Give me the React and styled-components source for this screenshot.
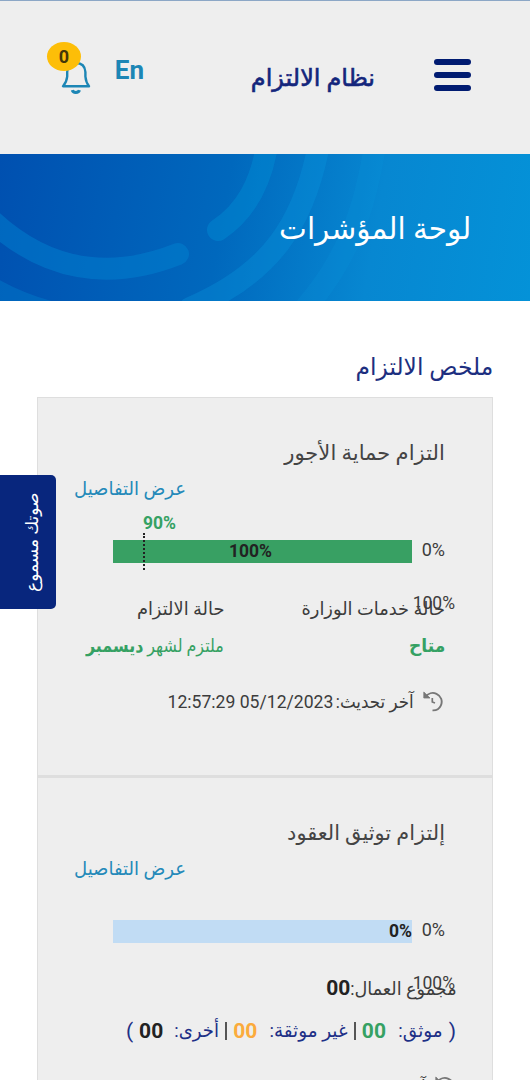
import React from 'react';
//styled-components
import styled, { createGlobalStyle } from 'styled-components';

const App = () => {
	return (
		<>
			<GlobalStyle />
			<Page dir="rtl">
				<Header>
					<Burger>
						<span />
						<span />
						<span />
					</Burger>
					<Brand>
						<Fit>نظام الالتزام</Fit>
					</Brand>
					<Language>En</Language>
					<Notifications>
						<BellIcon />
						<Badge>0</Badge>
					</Notifications>
				</Header>
				<Banner>
					<BannerArcs />
					<h1>
						<Fit $x={0.984}>لوحة المؤشرات</Fit>
					</h1>
				</Banner>
				<Main>
					<SectionTitle>
						<Fit $x={0.975}>ملخص الالتزام</Fit>
					</SectionTitle>
					<Card>
						<CardTitle>
							<Fit $x={1.005}>التزام حماية الأجور</Fit>
						</CardTitle>
						<DetailsLink>
							<Fit $left $x={0.95}>عرض التفاصيل</Fit>
						</DetailsLink>
						<Progress value={100} target={90} color="#38a063" />
						<StatusGrid>
							<dt>
								<Fit $x={0.99}>حالة خدمات الوزارة</Fit>
							</dt>
							<dt>
								<Fit $x={0.99}>حالة الالتزام</Fit>
							</dt>
							<dd>
								<Fit $x={0.95}>
									<b>متاح</b>
								</Fit>
							</dd>
							<dd>
								<Fit $x={0.885}>
									ملتزم لشهر <b>ديسمبر</b>
								</Fit>
							</dd>
						</StatusGrid>
						<Updated>
							<HistoryIcon />
							<Fit $x={0.93}>آخر تحديث:</Fit>
							<Stamp>12:57:29 05/12/2023</Stamp>
						</Updated>
					</Card>
					<Card>
						<CardTitle>
							<Fit $x={0.993}>إلتزام توثيق العقود</Fit>
						</CardTitle>
						<DetailsLink>
							<Fit $left $x={0.95}>عرض التفاصيل</Fit>
						</DetailsLink>
						<Progress value={0} color="#38a063" />
						<Total>
							<Fit $x={0.98}>مجموع العمال:</Fit>
							<Count $gap={-2}>00</Count>
						</Total>
						<Breakdown>
							<Paren>(</Paren>
							<Fit $x={0.97}>موثق:</Fit>
							<Count $color="#35a163" $gap={11}>00</Count>
							<Divider />
							<Fit $x={0.97}>غير موثقة:</Fit>
							<Count $color="#fbab3c" $gap={10}>00</Count>
							<Divider />
							<Fit $x={0.95}>أخرى:</Fit>
							<Count $gap={9}>00</Count>
							<Paren $last>)</Paren>
						</Breakdown>
						<Updated $low>
							<HistoryIcon />
							<Fit $x={0.93}>آخر تحديث:</Fit>
						</Updated>
					</Card>
				</Main>
				<VoiceTab>صوتك مسموع</VoiceTab>
			</Page>
		</>
	);
};

const Progress = ({ value, target, color }) => (
	<ProgressRow>
		<Scale>0%</Scale>
		<Track>
			<Fill style={{ width: `${value}%` }} $color={color} />
			<Value $end={value === 0}>{value}%</Value>
			{target && (
				<Target style={{ right: `${target}%` }}>
					<span>{target}%</span>
				</Target>
			)}
		</Track>
		<ScaleEnd>100%</ScaleEnd>
	</ProgressRow>
);

const BellIcon = () => (
	<svg width="30" height="36" viewBox="0 0 30 36" fill="none" stroke="#1c86b5" strokeWidth="2.4">
		<path
			d="M2 27.200H28C25.800 24.500 24.800 22 24.400 17.500V13C24 7.500 21 4 15 4S6.500 7.500 6.200 13V17.500C5.800 22 4.500 24.500 2 27.200Z"
			strokeLinejoin="round"
		/>
		<path d="M11.300 31.200C12 34.200 17.700 34.200 18.400 31.200" strokeWidth="3" />
	</svg>
);

const HistoryIcon = () => (
	<svg width="20" height="22" viewBox="0 0 20 22" fill="none" stroke="#777" strokeWidth="1.900">
		<path d="M2.500 5.800C5 2.300 9.500 1 13.500 2.800C18 4.900 20 10 17.800 14.700C16.300 18 13 19.600 9.500 19.400" />
		<path d="M0.800 1V7H7L0.800 1Z" fill="#777" strokeWidth="0.800" />
		<path d="M9.300 7V11L12 12" strokeWidth="1.700" />
	</svg>
);

const BannerArcs = () => (
	<Arcs viewBox="0 0 530 147" fill="none" strokeLinecap="round" strokeWidth="22">
		<path d="M-12 63C45 118 110 127 178 100" stroke="#0086d2" strokeOpacity=".45" />
		<path d="M-20 127C0 140 20 150 50 158" stroke="#0086d2" strokeOpacity=".35" />
		<path d="M218 76C245 58 262 30 268 -15" stroke="#0092d8" strokeOpacity=".4" />
		<path d="M190 154C270 120 305 70 320 -15" stroke="#0895dc" strokeOpacity=".35" />
		<path d="M300 160C345 110 365 60 376 -15" stroke="#0895dc" strokeOpacity=".2" />
	</Arcs>
);

const GlobalStyle = createGlobalStyle`
	* {
		box-sizing: border-box;
		margin: 0;
		padding: 0;
	}
	body {
		background: #fff;
		font-family: Roboto, "DejaVu Sans", sans-serif;
		color: #3c3c3c;
		overflow: hidden;
	}
`;

const Page = styled.div`
	position: relative;
	height: 1080px;
	overflow: hidden;
`;

const Fit = styled.span`
	display: inline-block;
	white-space: nowrap;
	transform: scaleX(${(p) => p.$x || 1});
	transform-origin: ${(p) => (p.$left ? 'left' : 'right')};
`;

const Header = styled.header`
	display: flex;
	align-items: flex-start;
	height: 154px;
	padding: 0 59px 0 0;
	background: #eee;
	border-top: 1px solid #8ca7c6;
`;

const Burger = styled.div`
	display: flex;
	flex-direction: column;
	gap: 7px;
	margin-top: 58px;
	span {
		width: 37px;
		height: 6px;
		border-radius: 3px;
		background: #001b71;
	}
`;

const Brand = styled.div`
	width: 124px;
	margin: 58px 59px 0 0;
	font-size: 24px;
	line-height: 38px;
	-webkit-text-stroke: 0.600px #14267c;
	color: #14267c;
`;

const Language = styled.div`
	width: 30px;
	margin: 54px 107px 0 0;
	font-size: 26px;
	line-height: 30px;
	font-weight: 700;
	color: #1c86b5;
`;

const Notifications = styled.div`
	position: relative;
	width: 30px;
	margin: 58px 23px 0 0;
`;

const Badge = styled.div`
	position: absolute;
	left: -14px;
	top: -17px;
	width: 34px;
	height: 29px;
	border-radius: 50%;
	background: #fdbe08;
	color: #443708;
	font-size: 18px;
	line-height: 29px;
	font-weight: 700;
	text-align: center;
`;

const Banner = styled.section`
	position: relative;
	height: 147px;
	padding: 52px 59px 0 0;
	background: linear-gradient(100deg, #0050b0 0%, #0068bd 42%, #0787d1 70%, #0492d8 100%);
	h1 {
		position: relative;
		font-size: 30px;
		line-height: 46px;
		font-weight: 400;
		color: #fff;
	}
`;

const Arcs = styled.svg`
	position: absolute;
	left: 0;
	top: 0;
	width: 530px;
	height: 147px;
`;

const Main = styled.main`
	padding: 46px 37px 0;
`;

const SectionTitle = styled.h2`
	height: 50px;
	font-size: 24px;
	line-height: 40px;
	font-weight: 400;
	color: #1d2f80;
`;

const Card = styled.section`
	height: 380px;
	padding: 37px 47px 0 36px;
	background: #eee;
	border: 1px solid #dedede;
	border-bottom-width: 2px;
`;

const CardTitle = styled.h3`
	font-size: 21px;
	line-height: 36px;
	font-weight: 400;
	color: #444;
`;

const DetailsLink = styled.div`
	direction: ltr;
	font-size: 19px;
	line-height: 36px;
	color: #2389b9;
`;

const ProgressRow = styled.div`
	position: relative;
	display: flex;
	align-items: flex-start;
	margin-top: 33px;
	height: 50px;
`;

const Scale = styled.div`
	width: 33px;
	font-size: 18px;
	line-height: 20px;
`;

const ScaleEnd = styled(Scale)`
	position: absolute;
	right: -10px;
	top: 53px;
	width: auto;
	font-size: 17.500px;
`;

const Track = styled.div`
	position: relative;
	width: 299px;
	height: 23px;
	background: #c1dcf4;
`;

const Fill = styled.div`
	height: 100%;
	background: ${(p) => p.$color};
`;

const Value = styled.div`
	position: absolute;
	top: 0;
	right: 0;
	width: ${(p) => (p.$end ? 'auto' : '323px')};
	font-size: 17.500px;
	line-height: 23px;
	font-weight: 700;
	color: #222;
	text-align: center;
`;

const Target = styled.div`
	position: absolute;
	top: -7px;
	height: 37px;
	margin-right: -2px;
	border-left: 2px dotted #222;
	span {
		position: absolute;
		left: -2px;
		top: -20px;
		font-size: 17.500px;
		line-height: 20px;
		font-weight: 700;
		color: #35a163;
	}
`;

const StatusGrid = styled.dl`
	display: grid;
	grid-template-columns: 221px 1fr;
	font-size: 18px;
	line-height: 37px;
	dt {
		white-space: nowrap;
	}
	dd {
		color: #35a163;
		white-space: nowrap;
	}
`;

const Updated = styled.div`
	display: flex;
	align-items: center;
	gap: 9px;
	margin: ${(p) => (p.$low ? '17px -10px 0 0' : '19px 2px 0 0')};
	font-size: 18px;
	line-height: 38px;
	white-space: nowrap;
`;

const Stamp = styled.span`
	direction: ltr;
	margin-right: -12px;
	font-size: 17.600px;
`;

const Total = styled.div`
	display: flex;
	margin-right: -12px;
	font-size: 18px;
	line-height: 37px;
`;

const Breakdown = styled.div`
	display: flex;
	align-items: center;
	margin: 4px -11px 0 0;
	font-size: 19px;
	line-height: 40px;
	color: #1d3086;
`;

const Count = styled.b`
	margin-right: ${(p) => p.$gap || 0}px;
	font-size: 21px;
	color: ${(p) => p.$color || '#222'};
`;

const Divider = styled.i`
	width: 2px;
	height: 18px;
	margin: 0 6px;
	background: #555;
`;

const Paren = styled.span`
	margin: ${(p) => (p.$last ? '0 6px 0 0' : '0 0 0 6px')};
	font-size: 21px;
`;

const VoiceTab = styled.aside`
	position: absolute;
	left: 0;
	top: 475px;
	width: 56px;
	height: 134px;
	padding: 0 10px 17px 0;
	border-radius: 5px 0 0 5px;
	transform: rotate(180deg);
	writing-mode: vertical-rl;
	background: #08267d;
	color: #fff;
	font-size: 17px;
	line-height: 44px;
	white-space: nowrap;
`;

export default App;
